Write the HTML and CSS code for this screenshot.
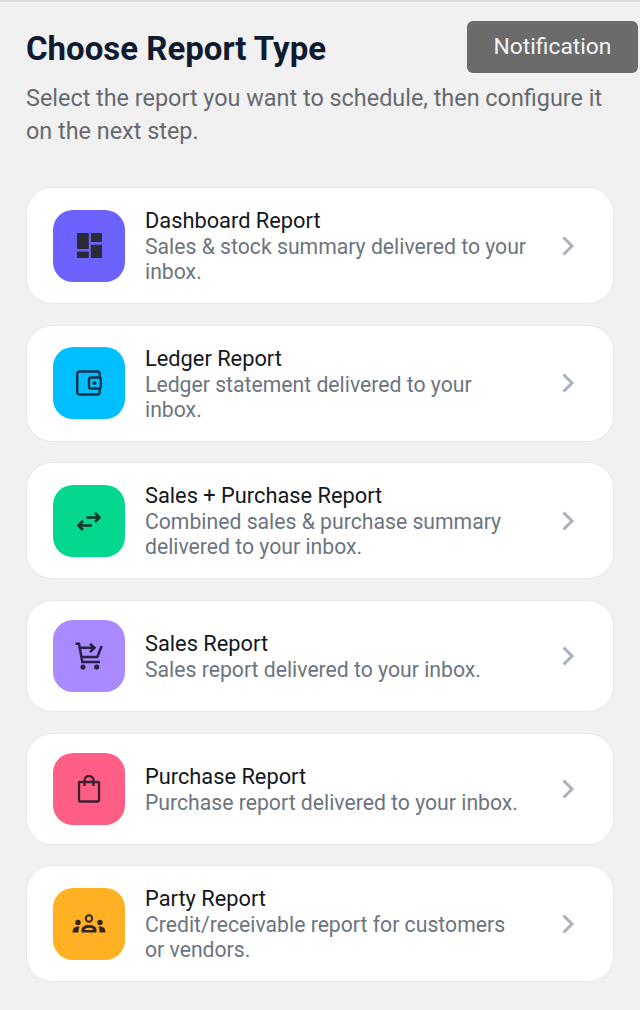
FILE: index.html
```html
<!DOCTYPE html>
<html lang="en">
<head>
    <meta charset="UTF-8">
    <meta name="viewport" content="width=device-width, initial-scale=1.0">
    <title>Choose Report Type</title>
    <link rel="stylesheet" href="styles.css">
</head>
<body>

    <div class="page">
        <h2>Choose Report Type</h2>
        <p class="intro">Select the report you want to schedule, then configure it on the next step.</p>

        <div class="report-list">
            <div class="report-card">
                <div class="report-icon icon-dashboard">
                    <svg viewBox="3 3 18 18" width="25" height="25"><path d="M3 3h8.500v11.500H3zM13 3h8v6.500h-8zM13 11.500h8V21h-8zM3 16.300h8.500V21H3z" fill="#2b2b33"/></svg>
                </div>
                <div class="report-text">
                    <div class="report-title">Dashboard Report</div>
                    <div class="report-desc">Sales &amp; stock summary delivered to your inbox.</div>
                </div>
                <svg class="chevron" viewBox="0 0 14 20" width="14" height="20"><path d="M2.500 1.500l8.500 8.500-8.500 8.500" fill="none" stroke="#a9b2bf" stroke-width="3"/></svg>
            </div>

            <div class="report-card">
                <div class="report-icon icon-ledger">
                    <svg viewBox="0 0 26 26" width="26" height="26"><rect x="1.200" y="1.500" width="22.500" height="23" rx="2.500" fill="none" stroke="#123049" stroke-width="2.400"/><rect x="13" y="7.500" width="11.800" height="11" rx="2" fill="#00bfff" stroke="#123049" stroke-width="2.400"/><circle cx="18.500" cy="13" r="2" fill="#123049"/></svg>
                </div>
                <div class="report-text">
                    <div class="report-title">Ledger Report</div>
                    <div class="report-desc">Ledger statement delivered to your inbox.</div>
                </div>
                <svg class="chevron" viewBox="0 0 14 20" width="14" height="20"><path d="M2.500 1.500l8.500 8.500-8.500 8.500" fill="none" stroke="#a9b2bf" stroke-width="3"/></svg>
            </div>

            <div class="report-card">
                <div class="report-icon icon-both">
                    <svg viewBox="0 0 26 20" width="26" height="20"><path d="M10.500 6.500H23M19 2l4.500 4.500L19 11M16 14.500H3M7 10l-4.500 4.500L7 19" fill="none" stroke="#17302b" stroke-width="2.600"/></svg>
                </div>
                <div class="report-text">
                    <div class="report-title">Sales + Purchase Report</div>
                    <div class="report-desc">Combined sales &amp; purchase summary delivered to your inbox.</div>
                </div>
                <svg class="chevron" viewBox="0 0 14 20" width="14" height="20"><path d="M2.500 1.500l8.500 8.500-8.500 8.500" fill="none" stroke="#a9b2bf" stroke-width="3"/></svg>
            </div>

            <div class="report-card">
                <div class="report-icon icon-sales">
                    <svg viewBox="0 0 28 30" width="28" height="30"><path d="M0.500 2.700H4L7.300 21H25M7.500 16h14.800l4.400-11" fill="none" stroke="#2a1f45" stroke-width="2.500"/><path d="M6 6.700h13M15 2.700l4.500 4-4.500 4.500" fill="none" stroke="#2a1f45" stroke-width="2.500"/><circle cx="8" cy="26" r="2.600" fill="#2a1f45"/><circle cx="21.700" cy="26" r="2.600" fill="#2a1f45"/></svg>
                </div>
                <div class="report-text">
                    <div class="report-title">Sales Report</div>
                    <div class="report-desc">Sales report delivered to your inbox.</div>
                </div>
                <svg class="chevron" viewBox="0 0 14 20" width="14" height="20"><path d="M2.500 1.500l8.500 8.500-8.500 8.500" fill="none" stroke="#a9b2bf" stroke-width="3"/></svg>
            </div>

            <div class="report-card">
                <div class="report-icon icon-purchase">
                    <svg viewBox="0 0 24 28" width="24" height="28"><path d="M2.500 7h19a.500.500 0 0 1 .500.500V25.500a1 1 0 0 1-1 1H3a1 1 0 0 1-1-1V7.500a.500.500 0 0 1 .500-.500zM7.500 11V5.500a4.500 4.500 0 0 1 9 0V11" fill="none" stroke="#3a2030" stroke-width="2.300"/></svg>
                </div>
                <div class="report-text">
                    <div class="report-title">Purchase Report</div>
                    <div class="report-desc">Purchase report delivered to your inbox.</div>
                </div>
                <svg class="chevron" viewBox="0 0 14 20" width="14" height="20"><path d="M2.500 1.500l8.500 8.500-8.500 8.500" fill="none" stroke="#a9b2bf" stroke-width="3"/></svg>
            </div>

            <div class="report-card">
                <div class="report-icon icon-party">
                    <svg viewBox="0 0 34 20" width="34" height="20"><circle cx="17" cy="4.500" r="3.200" fill="none" stroke="#33261a" stroke-width="2"/><path d="M9.500 18.500V16c0-3 3-5 7.500-5s7.500 2 7.500 5v2.500z" fill="#33261a"/><path d="M12.500 16c.5-1.300 2.300-2.200 4.500-2.200s4 .9 4.500 2.200z" fill="#ffb023"/><circle cx="6" cy="8.500" r="2.700" fill="#33261a"/><circle cx="28" cy="8.500" r="2.700" fill="#33261a"/><path d="M0.500 18.500c0-4 2-6 6-6l1 .5c-.8 1.500-1 3.500-1 5.500zM33.500 18.500c0-4-2-6-6-6l-1 .5c.8 1.500 1 3.500 1 5.500z" fill="#33261a"/></svg>
                </div>
                <div class="report-text">
                    <div class="report-title">Party Report</div>
                    <div class="report-desc">Credit/receivable report for customers or vendors.</div>
                </div>
                <svg class="chevron" viewBox="0 0 14 20" width="14" height="20"><path d="M2.500 1.500l8.500 8.500-8.500 8.500" fill="none" stroke="#a9b2bf" stroke-width="3"/></svg>
            </div>
        </div>
    </div>

    <button class="toast">Notification</button>

</body>
</html>
```

FILE: styles.css
```css
* {
    box-sizing: border-box;
}
body {
    margin: 0;
    height: 1010px;
    overflow: hidden;
    font-family: Roboto, "Liberation Sans", sans-serif;
    background-color: #f1f1f1;
    border-top: 2px solid #dcdcdc;
}
.page {
    padding: 28px 26px 0;
}
h2 {
    margin: 0;
    font-size: 33px;
    line-height: 38px;
    font-weight: 700;
    color: #101a30;
}
.intro {
    margin: 14px 0 0;
    font-size: 23.4px;
    line-height: 33px;
    color: #666a6f;
}
.report-list {
    display: flex;
    flex-direction: column;
    gap: 20.7px;
    margin-top: 39px;
}
.report-card {
    display: flex;
    align-items: center;
    padding: 19px 38px 19px 26px;
    background: white;
    border: 1px solid #e6e8ec;
    border-radius: 26px;
}
.report-icon {
    display: flex;
    align-items: center;
    justify-content: center;
    flex: none;
    width: 72px;
    height: 72px;
    border-radius: 20px;
}
.icon-dashboard { background-color: #6c63ff; }
.icon-ledger { background-color: #00bfff; }
.icon-both { background-color: #04d88f; }
.icon-sales { background-color: #a98bff; }
.icon-purchase { background-color: #ff5f85; }
.icon-party { background-color: #ffb023; }
.report-text {
    flex: 1;
    margin: 0 33px 0 20px;
}
.report-title {
    font-size: 21.8px;
    line-height: 27px;
    color: #14171c;
}
.report-desc {
    font-size: 21.2px;
    line-height: 25px;
    color: #6c7480;
}
.chevron {
    flex: none;
}
.toast {
    position: absolute;
    top: 21px;
    left: 467px;
    width: 171px;
    height: 52px;
    padding: 0 0 2px;
    font-family: inherit;
    font-size: 22.8px;
    color: #f4f4f4;
    background-color: #6b6b6b;
    border: none;
    border-radius: 6px;
}
```
